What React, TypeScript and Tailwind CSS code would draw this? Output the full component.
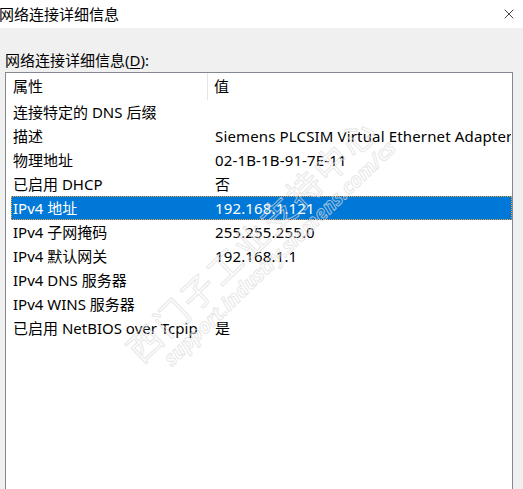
import { X } from 'lucide-react';

const FONT = '[font-family:"Noto_Sans","Noto_Sans_CJK_SC",sans-serif]';

interface Row {
  name: string;
  value: string;
  selected?: boolean;
}

const rows: Row[] = [
  { name: '连接特定的 DNS 后缀', value: '' },
  { name: '描述', value: 'Siemens PLCSIM Virtual Ethernet Adapter' },
  { name: '物理地址', value: '02-1B-1B-91-7E-11' },
  { name: '已启用 DHCP', value: '否' },
  { name: 'IPv4 地址', value: '192.168.1.121', selected: true },
  { name: 'IPv4 子网掩码', value: '255.255.255.0' },
  { name: 'IPv4 默认网关', value: '192.168.1.1' },
  { name: 'IPv4 DNS 服务器', value: '' },
  { name: 'IPv4 WINS 服务器', value: '' },
  { name: '已启用 NetBIOS over Tcpip', value: '是' },
];

export default function App() {
  return (
    <div className={`relative w-[523px] h-[489px] overflow-hidden bg-[#f0f0f0] text-[15px] text-black ${FONT}`}>
      {/* title bar */}
      <div className="h-[28px] bg-white flex items-center justify-between">
        <span className="-ml-[1px] leading-none">网络连接详细信息</span>
        <X className="w-[16px] h-[16px] mr-[6px]" strokeWidth={1.1} />
      </div>

      <div className="pt-[20px] pl-[5px] pr-[10px]">
        <div className="h-[24px] flex items-center">
          网络连接详细信息(<span className="underline underline-offset-2">D</span>):
        </div>

        {/* list view */}
        <div className="h-[420px] border border-[#828790] bg-white">
          <div className="h-[27px] flex items-center">
            <div className="w-[202px] h-full flex items-center pl-[7px] border-r border-[#e5e5e5]">属性</div>
            <div className="pl-[6px]">值</div>
          </div>
          <div className="pl-[5px]">
            {rows.map(row => (
              <div
                key={row.name}
                className={
                  row.selected
                    ? 'h-[24px] flex items-center whitespace-nowrap overflow-hidden bg-[#0078d7] text-white border border-dotted border-[#f5a040]'
                    : 'h-[24px] flex items-center whitespace-nowrap overflow-hidden border border-transparent'
                }
              >
                <div className="w-[203px] shrink-0 pl-[1px]">{row.name}</div>
                <div className="tracking-[0.15px]">{row.value}</div>
              </div>
            ))}
          </div>
        </div>
      </div>

      {/* watermark */}
      <div className="absolute left-[140px] top-[335px] -rotate-[44deg] origin-left pointer-events-none select-none flex flex-col leading-none opacity-70">
        <span className="text-[34px] text-transparent [-webkit-text-stroke:1px_#dedede] tracking-[3px]">西门子工业支持中心</span>
        <span className="text-[20px] italic font-bold text-transparent [-webkit-text-stroke:1px_#dedede] ml-[20px] mt-[2px]">support.industry.siemens.com/cs</span>
      </div>
    </div>
  );
}
